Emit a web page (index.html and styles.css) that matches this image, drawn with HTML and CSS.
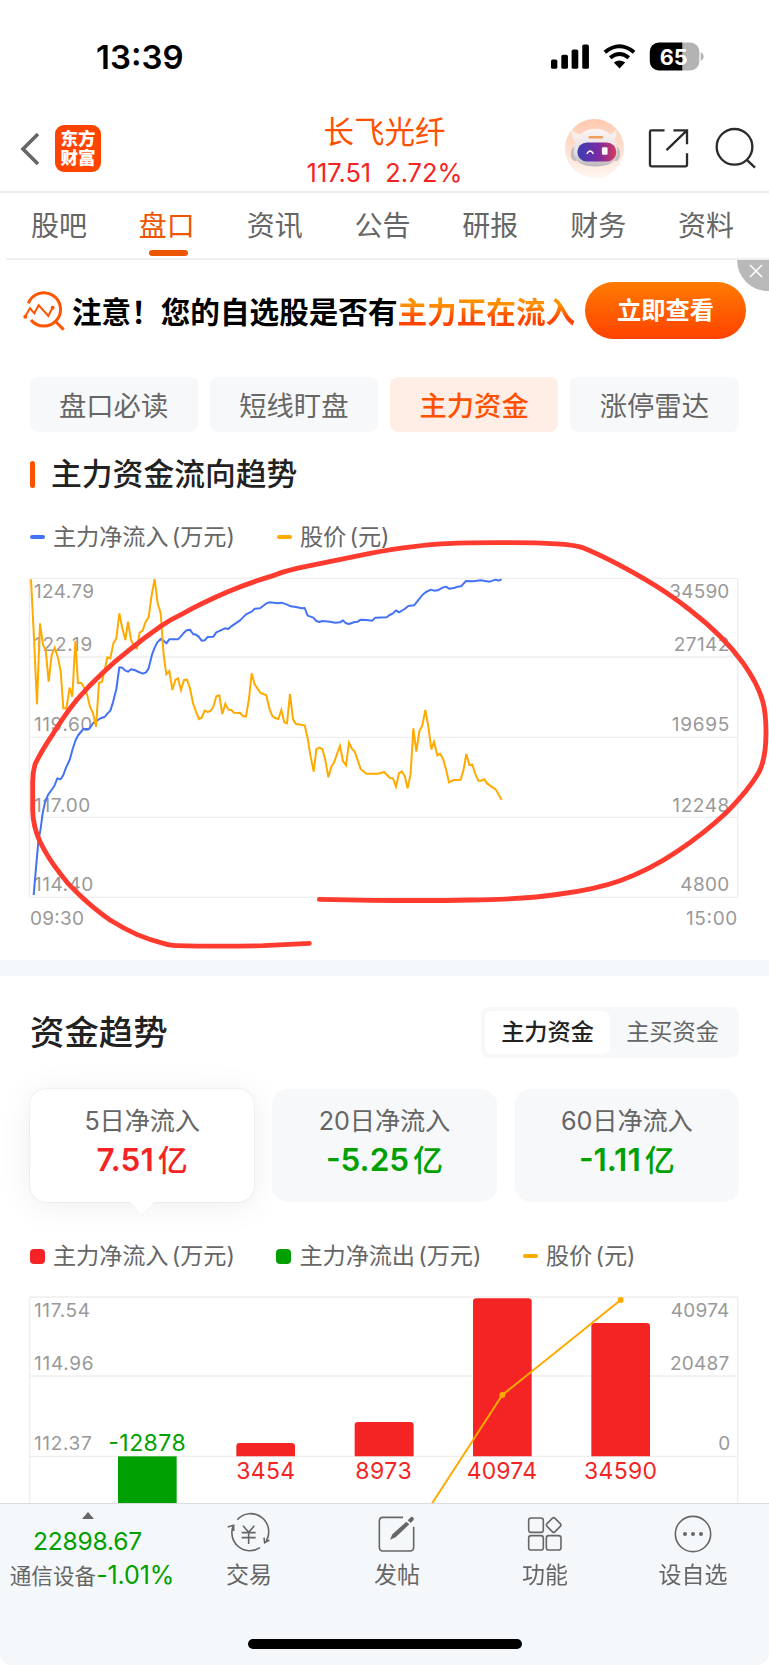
FILE: index.html
```html
<!DOCTYPE html>
<html lang="zh-CN">
<head>
  <meta charset="UTF-8" />
  <meta name="viewport" content="width=device-width, initial-scale=1.0"/>
  <title>长飞光纤 - 盘口</title>
  <link rel="stylesheet" href="styles.css">
</head>
<body>
  <div class="status-bar">
    <span class="clock">13:39</span>
    <svg class="status-icons" viewBox="498 128 460 86">
      <rect x="498" y="180" width="19" height="28" rx="5"/>
      <rect x="529" y="166" width="20" height="42" rx="5"/>
      <rect x="560" y="150" width="20" height="58" rx="5"/>
      <rect x="592" y="135" width="20" height="73" rx="5"/>
      <path class="wifi" d="M660 158Q704 122 748 158M676 175Q704 152 732 175"/>
      <path d="M687 189Q704 177 721 189L704 207Z"/>
      <path d="M893 129h24a27 27 0 0 1 27 27v30a27 27 0 0 1-27 27h-24z" fill="#b3b3b3"/>
      <path d="M893 129h-71a27 27 0 0 0-27 27v30a27 27 0 0 0 27 27h71z"/>
      <path d="M948 158q9 4 9 13t-9 13z" fill="#b3b3b3"/>
      <text x="825" y="196" textLength="84" lengthAdjust="spacingAndGlyphs">65</text>
    </svg>
  </div>

  <header class="header">
    <div class="header-left">
      <svg class="back" viewBox="0 0 20 34"><path d="M18 2L3 17L18 32"/></svg>
      <div class="logo">东方<br>财富</div>
    </div>
    <div class="stock">
      <div class="stock-name">长飞光纤</div>
      <div class="stock-price"><span>117.51</span><span>2.72%</span></div>
    </div>
    <div class="header-right">
      <svg class="avatar" viewBox="0 0 176 176">
        <defs>
          <linearGradient id="halo" x1="0" y1="0" x2="0" y2="1"><stop offset="0" stop-color="#ffc9ae"/><stop offset="1" stop-color="#fff6f1"/></linearGradient>
          <linearGradient id="visor" x1="0" y1="0" x2="1" y2="0"><stop offset="0" stop-color="#3a3fb4"/><stop offset=".55" stop-color="#7a2aa0"/><stop offset="1" stop-color="#d83a5c"/></linearGradient>
          <linearGradient id="shell" x1="0" y1="0" x2="0" y2="1"><stop offset="0" stop-color="#faf5f3"/><stop offset=".6" stop-color="#e6e0e1"/><stop offset="1" stop-color="#bdb7bb"/></linearGradient>
        </defs>
        <circle cx="88" cy="88" r="88" fill="url(#halo)"/>
        <path d="M20 30Q14 64 42 70L60 44Q32 50 20 30ZM152 30Q160 64 132 70L116 44Q144 50 152 30Z" fill="#f6eeeb"/>
        <ellipse cx="30" cy="104" rx="13" ry="22" fill="#c2bcc0"/>
        <ellipse cx="152" cy="104" rx="12" ry="22" fill="#c2bcc0"/>
        <path d="M90 29C132 29 156 62 156 98C156 130 128 142 90 142C54 142 26 130 26 98C26 62 50 29 90 29Z" fill="url(#shell)"/>
        <rect x="37" y="70" width="116" height="57" rx="28" fill="url(#visor)"/>
        <rect x="70" y="51" width="44" height="7" rx="3" fill="#eda05d"/>
        <path d="M65 104Q75 87 85 104" fill="none" stroke="#fff" stroke-width="4"/>
        <rect x="110" y="84" width="17" height="23" rx="4" fill="#fff"/>
      </svg>
      <svg class="share" viewBox="278 53 124 122">
        <path d="M328 59H288Q284 59 284 63V164Q284 168 288 168H392Q396 168 396 164V128M355 59H396V101M334 119L395 60"/>
      </svg>
      <svg class="search" viewBox="480 48 130 128">
        <circle cx="539" cy="107" r="54"/><path d="M577 147L601 170"/>
      </svg>
    </div>
  </header>

  <nav class="tabs">
    <a>股吧</a><a class="active">盘口</a><a>资讯</a><a>公告</a><a>研报</a><a>财务</a><a>资料</a>
  </nav>

  <div class="banner">
    <svg class="banner-icon" viewBox="68 88 132 126">
      <path d="M87 128A50 50 0 1 1 95 178M170 184L193 207"/>
      <path class="thin" d="M78 167L92 143L105 158L118 134L147 166L159 142"/>
      <circle cx="78" cy="168" r="6"/><circle cx="160" cy="141" r="6"/>
    </svg>
    <p class="banner-text">注意！您的自选股是否有<em>主力正在流入</em></p>
    <button class="banner-btn">立即查看</button>
    <span class="banner-close"><svg viewBox="0 0 14 14"><path d="M1 1L13 13M13 1L1 13"/></svg></span>
  </div>

  <div class="chips">
    <button>盘口必读</button>
    <button>短线盯盘</button>
    <button class="active">主力资金</button>
    <button>涨停雷达</button>
  </div>

  <section class="flow">
    <h2>主力资金流向趋势</h2>
    <div class="legend">
      <span class="key"><i class="dash blue"></i>主力净流入 (万元)</span>
      <span class="key"><i class="dash"></i>股价 (元)</span>
    </div>
    <svg class="chart flow-chart" viewBox="-60 0 2307 1185">
      <path class="grid" d="M28 40H2153M28 276H2153M28 517H2153M28 757H2153M28 997H2153M28 40V997M2153 40V997"/>
      <g class="axis">
        <text x="42" y="100" textLength="180">124.79</text>
        <text x="42" y="259" textLength="175">122.19</text>
        <text x="42" y="499" textLength="175">119.60</text>
        <text x="42" y="740" textLength="169">117.00</text>
        <text x="42" y="979" textLength="178">114.40</text>
        <text x="1948" y="100" textLength="180">34590</text>
        <text x="1961" y="259" textLength="167">27142</text>
        <text x="1955" y="499" textLength="173">19695</text>
        <text x="1957" y="740" textLength="171">12248</text>
        <text x="1981" y="979" textLength="147">4800</text>
        <text x="30" y="1079" textLength="162">09:30</text>
        <text x="1998" y="1079" textLength="154">15:00</text>
      </g>
      <polyline class="line-blue" points="41,990 47,920 55,830 62,790 68,745 75,712 84,690 103,663 112,640 122,643 130,630 138,608 149,585 158,552 167,525 175,510 190,492 207,492 220,474 232,466 243,459 254,456 262,446 271,437 279,412 289,372 298,307 307,308 315,316 324,320 333,313 344,315 356,321 369,326 378,322 386,310 396,269 404,248 412,232 422,222 430,226 439,235 448,223 474,223 482,215 492,203 500,196 510,194 519,207 528,209 536,215 545,227 554,226 563,216 580,215 589,202 615,190 625,192 634,184 660,166 678,148 696,139 704,131 720,130 738,116 747,112 775,115 784,113 800,118 812,124 828,126 845,130 854,129 863,152 880,158 889,168 898,171 907,168 930,170 946,173 960,172 969,166 978,175 987,177 1004,171 1013,170 1022,164 1040,165 1057,167 1066,158 1100,157 1109,150 1119,145 1128,136 1137,142 1154,132 1165,123 1182,121 1192,109 1207,90 1218,81 1233,74 1242,77 1253,76 1268,68 1278,65 1287,71 1302,69 1313,65 1323,64 1338,48 1360,49 1382,46 1409,50 1427,44 1436,47 1445,43"/>
      <polyline class="line-orange" points="33,43 42,220 51,418 60,175 69,240 77,255 86,350 95,270 104,248 113,275 122,318 130,430 139,431 149,368 157,395 166,228 174,354 184,354 192,367 201,388 210,425 219,445 228,485 237,354 246,350 254,315 262,277 271,280 280,235 289,220 298,145 307,190 316,225 324,170 333,225 342,245 351,250 359,203 368,197 377,170 386,157 395,90 404,42 413,115 422,145 431,270 439,328 448,318 457,375 466,345 474,340 483,375 492,345 501,344 510,370 519,415 528,440 537,462 545,458 554,437 563,441 572,438 580,425 589,394 598,391 607,447 616,416 625,434 634,435 642,443 660,444 669,453 678,455 687,400 695,325 704,358 722,384 739,391 748,430 757,453 766,459 775,462 784,435 793,472 801,475 810,387 819,463 828,477 854,481 863,520 872,575 881,620 889,553 898,548 907,552 916,585 925,637 934,605 942,593 951,567 960,543 969,588 978,601 987,533 996,552 1004,559 1022,612 1039,626 1075,626 1092,621 1110,639 1119,640 1128,665 1137,625 1145,619 1154,633 1163,670 1172,625 1180,490 1189,560 1198,499 1207,481 1216,435 1225,485 1234,553 1242,530 1252,571 1260,566 1269,581 1278,613 1287,652 1301,645 1322,644 1331,613 1339,567 1348,600 1357,599 1366,627 1375,647 1384,647 1393,643 1402,656 1427,673 1445,704"/>
      <!-- hand-drawn marker -->
      <path class="marker" d="M898 1003Q1180 1009 1350 1005Q1520 1003 1620 987Q1730 972 1800 947Q1890 914 1970 860Q2050 808 2120 742Q2185 676 2215 625Q2238 583 2238 505Q2238 440 2227 405Q2213 356 2170 295Q2110 212 2010 135Q1945 83 1870 40Q1760 -23 1685 -53Q1640 -67 1470 -67Q1270 -69 1180 -55Q1120 -48 1050 -35L830 10Q790 19 750 35Q680 56 620 82Q540 117 490 145Q450 164 420 185Q370 220 330 253Q285 288 250 322Q205 364 170 405Q135 448 100 505Q64 558 45 598Q37 625 38 660V735Q39 785 60 830Q84 879 120 925Q143 957 170 982Q220 1031 270 1065Q310 1090 350 1108Q390 1125 430 1135Q445 1141 470 1142Q600 1145 730 1142L868 1135"/>
    </svg>
  </section>

  <section class="trend">
    <div class="trend-head">
      <h3>资金趋势</h3>
      <div class="toggle"><span class="active">主力资金</span><span>主买资金</span></div>
    </div>
    <div class="cards">
      <div class="card active"><p>5日净流入</p><strong class="up">7.51<b>亿</b></strong></div>
      <div class="card"><p>20日净流入</p><strong class="down">-5.25<b>亿</b></strong></div>
      <div class="card"><p>60日净流入</p><strong class="down">-1.11<b>亿</b></strong></div>
    </div>
    <div class="legend">
      <span class="key"><i class="box red"></i>主力净流入 (万元)</span>
      <span class="key"><i class="box green"></i>主力净流出 (万元)</span>
      <span class="key"><i class="dash"></i>股价 (元)</span>
    </div>
    <svg class="chart trend-chart" viewBox="0 0 2307 699">
      <path class="grid" d="M89 81H2213M89 318H2213M89 559H2213M89 81V699M2213 81V699"/>
      <g class="axis">
        <text x="102" y="142" textLength="168">117.54</text>
        <text x="102" y="300" textLength="179">114.96</text>
        <text x="102" y="541" textLength="173">112.37</text>
        <text x="2012" y="142" textLength="176">40974</text>
        <text x="2010" y="300" textLength="178">20487</text>
        <text x="2155" y="541">0</text>
      </g>
      <rect x="354" y="559" width="176" height="143" fill="#00a000"/>
      <g fill="#f42424">
        <path d="M709 559V529q0-10 10-10H875q10 0 10 10V559z"/>
        <path d="M1064 559V466q0-10 10-10H1231q10 0 10 10V559z"/>
        <path d="M1419 559V95q0-10 10-10H1585q10 0 10 10V559z"/>
        <path d="M1774 559V169q0-10 10-10H1940q10 0 10 10V559z"/>
      </g>
      <g class="values">
        <text class="down" x="325" y="544" textLength="232">-12878</text>
        <text x="709" y="628" textLength="176">3454</text>
        <text x="1066" y="628" textLength="169">8973</text>
        <text x="1400" y="628" textLength="211">40974</text>
        <text x="1752" y="628" textLength="219">34590</text>
      </g>
      <polyline class="line-orange" points="1295,702 1507,375 1862,90"/>
      <circle cx="1507" cy="375" r="9" fill="#ffaa00"/><circle cx="1862" cy="90" r="9" fill="#ffaa00"/>
    </svg>
  </section>

  <footer class="bottom">
    <div class="bottom-nav">
      <div class="index">
        <i class="arrow"></i>
        <div class="index-value">22898.67</div>
        <div class="index-name">通信设备<span>-1.01%</span></div>
      </div>
      <div class="item">
        <svg viewBox="684 726 132 132"><path d="M715 749A54 54 0 0 1 802 812M783 833A54 54 0 0 1 704 765M686 771L704 766V783M811 810L797 818L795 803"/><path d="M732 767L749 787L766 767M749 787V822M728 788H770M728 803H770"/></svg>
        <span>交易</span>
      </div>
      <div class="item">
        <svg viewBox="0 0 132 132"><path d="M84 16H24Q13 16 13 27V106Q13 117 24 117H105Q116 117 116 106V44"/><path class="solid" d="M106 17Q111 12 115 17T115 25L107 33L98 25ZM94 29L103 37L62 76L45 83L52 67Z"/></svg>
        <span>发帖</span>
      </div>
      <div class="item">
        <svg viewBox="418 726 132 132"><rect x="435" y="744" width="44" height="43" rx="7"/><rect x="435" y="797" width="44" height="43" rx="7"/><rect x="488" y="797" width="44" height="43" rx="7"/><rect x="493" y="748" width="34" height="34" rx="5" transform="rotate(45 510 765)"/></svg>
        <span>功能</span>
      </div>
      <div class="item">
        <svg viewBox="861 726 132 132"><circle cx="927" cy="792" r="53"/><g class="solid"><circle cx="903" cy="792" r="6"/><circle cx="927" cy="792" r="6"/><circle cx="951" cy="792" r="6"/></g></svg>
        <span>设自选</span>
      </div>
    </div>
    <div class="home-bar"></div>
  </footer>
</body>
</html>
```
FILE: styles.css
```css
* { margin: 0; padding: 0; box-sizing: border-box; }
body {
  width: 769px; height: 1665px;
  font-family: Inter, "Noto Sans CJK SC", sans-serif;
  background-color: #fff;
  color: #666;
  overflow: hidden;
}
svg { display: block; fill: none; }
button { border: none; font-family: inherit; }

.status-bar {
  height: 111px;
  padding: 41px 65px 0 96px;
  display: flex;
  justify-content: space-between;
}
.clock { font-size: 33px; line-height: 32px; font-weight: 600; color: #000; letter-spacing: 0; }
.status-icons { width: 153px; height: 29px; margin-top: 1px; fill: #000; }
.status-icons .wifi { fill: none; stroke: #000; stroke-width: 12; }
.status-icons text { fill: #fff; font-size: 64px; font-weight: 700; }

.header {
  height: 82px;
  display: grid;
  grid-template-columns: 1fr 200px 1fr;
  border-bottom: 2px solid #ebeced;
}
.header-left { display: flex; align-items: center; padding: 0 0 7px 20px; gap: 15px; }
.back { width: 20px; height: 34px; stroke: #666; stroke-width: 3.6; }
.logo {
  width: 46px; height: 47px;
  border-radius: 9px;
  background: #ff4400;
  color: #fff;
  font-size: 17.5px;
  font-weight: 900;
  line-height: 19px;
  text-align: center;
  padding-top: 4px;
}
.stock { text-align: center; }
.stock-name { font-size: 30.5px; line-height: 42px; color: #ff5000; }
.stock-price {
  display: flex;
  justify-content: center;
  gap: 14px;
  font-size: 25.4px;
  line-height: 40px;
  color: #f42424;
}
.header-right { display: flex; justify-content: flex-end; align-items: center; padding: 0 11px 7px 0; }
.avatar { width: 59px; height: 59px; }
.share { width: 41px; height: 41px; margin: 0 26px 0 24px; stroke: #2b2b2b; stroke-width: 7; }
.search { width: 43px; height: 43px; stroke: #2b2b2b; stroke-width: 7; }

.tabs {
  height: 67px;
  margin-left: 6px;
  padding-right: 8px;
  display: flex;
  border-bottom: 2px solid #edeff0;
  font-size: 28px;
  line-height: 67px;
}
.tabs a { flex: 1; text-align: center; position: relative; left: -1px; }
.tabs .active { color: #ee5500; }
.tabs .active::after {
  content: "";
  position: absolute;
  left: 50%; bottom: 2px;
  width: 39px; height: 6px;
  margin-left: -18px;
  border-radius: 3px;
  background: #ee5500;
}

.banner {
  height: 116px;
  padding: 22px 0 0 22px;
  display: flex;
  align-items: flex-start;
  position: relative;
}
.banner-icon { width: 44px; height: 42px; margin-top: 8px; stroke: #ff5500; stroke-width: 9; }
.banner-icon .thin { stroke-width: 6; }
.banner-icon circle { fill: #ff5500; stroke: none; }
.banner-text { margin-left: 6px; width: 513px; white-space: nowrap; font-size: 29.6px; line-height: 61px; font-weight: 700; color: #000; }
.banner-text em {
  font-style: normal;
  background: linear-gradient(#ff9000 30%, #ff4400 70%);
  -webkit-background-clip: text;
  color: transparent;
}
.banner-btn {
  width: 161px; height: 57px;
  padding-bottom: 4px;
  border-radius: 29px;
  background: linear-gradient(#ff7b00, #ff4200);
  color: #fff;
  font-size: 24.3px;
  font-weight: 700;
}
.banner-close {
  position: absolute;
  right: 0; top: 0;
  width: 32px; height: 31px;
  border-bottom-left-radius: 31px;
  background: #b9b9b9;
}
.banner-close svg { width: 14px; height: 14px; margin: 4px 0 0 12px; stroke: #fff; stroke-width: 1.5; }

.chips { display: grid; grid-template-columns: repeat(4, 1fr); gap: 12px; padding: 1px 30.5px 0 29.5px; }
.chips button { height: 55px; padding-bottom: 2px; border-radius: 8px; background: #f7f8fa; color: #666; font-size: 27.3px; }
.chips .active { background: #ffeee6; color: #ff5000; font-weight: 500; }

.flow { height: 528px; border-bottom: none; }
h2 {
  display: flex;
  align-items: center;
  gap: 16px;
  padding: 19px 0 0 30px;
  font-size: 30.8px;
  line-height: 46px;
  font-weight: 500;
  color: #222;
}
h2::before { content: ""; width: 5px; height: 27px; border-radius: 3px; background: #ff5000; }

.legend { display: flex; height: 30px; padding-left: 29.5px; font-size: 23.2px; line-height: 30px; word-spacing: -3px; }
.key { display: flex; align-items: center; width: 247px; white-space: nowrap; letter-spacing: -0.1px; }
.key i { width: 15px; margin-right: 8.5px; }
.dash { height: 4px; border-radius: 2px; background: #ffaa00; }
.dash.blue { background: #4372f5; }
.box { height: 15px; border-radius: 4px; }
.red { background: #f42424; }
.green { background: #00a000; }

.flow .legend { margin-top: 25px; }
.chart { width: 769px; overflow: visible; }
.flow-chart { height: 395px; margin-top: 13px; position: relative; }
.grid { stroke: #eee; stroke-width: 4; }
.axis { font-size: 57px; fill: #999; }
.line-blue { stroke: #4372f5; stroke-width: 6; stroke-linejoin: round; }
.line-orange { stroke: #ffaa00; stroke-width: 6; }
.marker { stroke: #ff3b30; stroke-width: 14.5; stroke-linecap: round; }

.trend { border-top: 16px solid #f5f8fa; }
.trend-head { display: flex; justify-content: space-between; padding: 31px 30px 0 30px; height: 113px; }
h3 { font-size: 34.4px; line-height: 51px; font-weight: 500; color: #222; }
.toggle {
  display: flex;
  width: 258px; height: 51px;
  padding: 4px;
  border-radius: 8px;
  background: #f7f8fa;
  font-size: 23.2px;
  line-height: 43px;
  text-align: center;
}
.toggle span { flex: 1; }
.toggle .active { border-radius: 7px; background: #fff; color: #222; font-weight: 500; }

.cards { display: grid; grid-template-columns: repeat(3, 1fr); gap: 18px; padding: 0 30px; }
.card { height: 113px; padding-top: 14px; border-radius: 16px; background: #f7f8fa; text-align: center; position: relative; }
.card p { font-size: 25.2px; line-height: 36px; letter-spacing: -0.1px; }
.card strong { display: block; font-size: 31.5px; line-height: 42px; font-weight: 600; letter-spacing: 0; }
.card b { font-size: 30px; font-weight: 500; margin-left: 4px; }
.card.active { background: #fff; box-shadow: 0 4px 34px rgba(0, 0, 0, .07), 0 0 2px rgba(0, 0, 0, .12); }
.card.active::after {
  content: "";
  position: absolute;
  left: 100px; bottom: -12px;
  border: 12px solid transparent;
  border-top-color: #fff;
  border-bottom: none;
}
.up { color: #f42424; }
.down { color: #00a000; fill: #00a000; }

.trend .legend { margin-top: 39px; }
.trend-chart { height: 233px; margin-top: -1px; }
.values { font-size: 69px; fill: #f42424; }
.values .down { fill: #00a000; }

.bottom {
  position: fixed;
  left: 0; top: 1503px;
  width: 769px; height: 162px;
  border-top: 1px solid #d9dcdd;
  border-radius: 0 0 12px 12px;
  background: #f5f8fa;
}
.bottom-nav { display: grid; grid-template-columns: 175px repeat(4, 148px); height: 135px; }
.index { display: flex; flex-direction: column; align-items: center; color: #666; }
.arrow { border: 6px solid transparent; border-bottom: 7px solid #666; border-top: none; margin-top: 8px; }
.index-value { font-size: 24.6px; line-height: 30px; margin-top: 7px; color: #00a000; letter-spacing: -0.2px; }
.index-name { font-size: 21.6px; line-height: 30px; margin: 4px 0 0 9px; white-space: nowrap; }
.index-name span { font-size: 25px; color: #00a000; letter-spacing: -0.1px; }
.item { display: flex; flex-direction: column; align-items: center; font-size: 23px; line-height: 30px; }
.item svg { width: 44px; height: 44px; margin: 8px 0 4px; stroke: #666; stroke-width: 4.8; }
.item .solid { fill: #666; stroke: none; }
.home-bar { width: 274px; height: 10px; margin: 0 auto; border-radius: 5px; background: #000; }
```
